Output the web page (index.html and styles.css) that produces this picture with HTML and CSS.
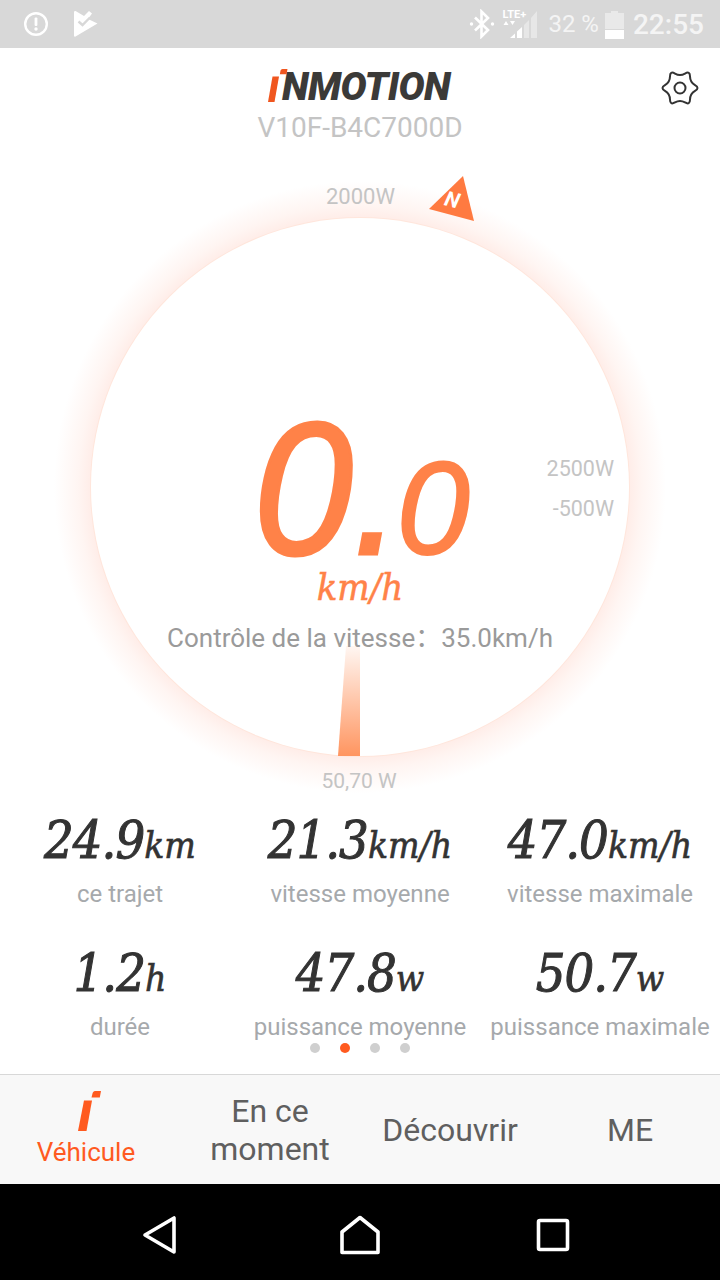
FILE: index.html
```html
<!DOCTYPE html>
<html lang="fr">
<head>
<meta charset="utf-8">
<title>Inmotion V10F</title>
<link rel="stylesheet" href="styles.css">
</head>
<body>
<div class="app">
  <div class="statusbar">
    <div class="status-left">
      <svg class="ic-alert" width="26" height="26" viewBox="0 0 26 26"><circle cx="13" cy="13" r="10.8" fill="none" stroke="#fff" stroke-width="2.4"/><rect x="11.6" y="6.5" width="2.8" height="8.5" rx="1" fill="#fff"/><circle cx="13" cy="18" r="1.7" fill="#fff"/></svg>
      <svg class="ic-play" width="26" height="28" viewBox="0 0 26 28"><path d="M1 2.500 C1 1 2 .6 3 1.300 L11 6 L16 1 L19 3.500 L15 9 L24.500 13.500 L2.500 26.500 C1.500 27 1 26.500 1 25.500 Z" fill="#fff"/><path d="M5.500 11.500 L9.500 15 L17 7.500" fill="none" stroke="#d8d8d8" stroke-width="2.400"/></svg>
    </div>
    <div class="status-right">
      <svg class="ic-bt" width="26" height="30" viewBox="0 0 26 30"><path d="M6 8.500 L19 21 L12.500 27.500 V2.500 L19 9 L6 21.500" fill="none" stroke="#fff" stroke-width="2.600"/><circle cx="2.500" cy="15" r="1.700" fill="#fff"/><circle cx="23.500" cy="15" r="1.700" fill="#fff"/></svg>
      <div class="signal">
        <span class="lte">LTE+</span>
        <svg width="36" height="28" viewBox="0 0 36 28"><path d="M1.500 15 L4 11 L6.500 15 Z M8 11 L13 11 L10.500 15 Z" fill="#fff"/><path d="M8 28 L13 23.500 V28 Z M15 21.500 L20 17 V28 H15 Z" fill="#fff"/><path d="M22 15 L27 10 V28 H22 Z M29 8 L35 1 V28 H29 Z" fill="#fff" opacity=".4"/></svg>
      </div>
      <span class="batt-pct">32 %</span>
      <svg class="ic-batt" width="20" height="28" viewBox="0 0 20 28"><path d="M6 0 H13 V2 H19 V18 H0 V2 H6 Z" fill="#fff" opacity=".45"/><rect x="0" y="19" width="19" height="9" fill="#fff"/></svg>
      <span class="clock">22:55</span>
    </div>
  </div>

  <header class="topbar">
    <div class="logo">
      <svg class="logo-mark" width="20" height="34" viewBox="0 0 20 34"><path d="M4.500 7.500 H11 L6.500 33 H0 Z" fill="#f0561f"/><path d="M12.500 1.800 C12.800 .7 13.500 0 14.500 0 H19.500 L18.500 5.200 H11.800 Z" fill="#f0561f"/></svg>
      <span class="logo-text">NMOTION</span>
    </div>
    <div class="model">V10F-B4C7000D</div>
    <svg class="gear" width="40" height="40" viewBox="-20 -20 40 40"><path d="M15.020 -2.900 Q20 0 15.020 2.900 Q10.050 5.800 10.020 11.560 Q10 17.320 5 14.460 Q0 11.600 -5 14.460 Q-10 17.320 -10.020 11.560 Q-10.050 5.800 -15.020 2.900 Q-20 0 -15.020 -2.900 Q-10.050 -5.800 -10.020 -11.560 Q-10 -17.320 -5 -14.460 Q0 -11.600 5 -14.460 Q10 -17.320 10.020 -11.560 Q10.050 -5.800 15.020 -2.900 Z" fill="none" stroke="#333" stroke-width="2"/><circle r="5.500" fill="none" stroke="#333" stroke-width="2"/></svg>
  </header>

  <section class="gauge">
    <span class="dial-label l-2000">2000W</span>
    <div class="north">
      <svg width="48" height="48" viewBox="0 0 48 48"><path d="M35 1 L46 46 L1 34 Z" fill="#ff7a40"/></svg>
      <span class="north-n">N</span>
    </div>
    <div class="disc">
      <svg class="needle" width="24" height="110" viewBox="0 0 24 110"><defs><linearGradient id="ng" x1="0" y1="1" x2="0" y2="0"><stop offset="0" stop-color="#ff9560"/><stop offset="1" stop-color="#ff9560" stop-opacity=".08"/></linearGradient></defs><path d="M9 0 H23 V110 H1 Z" fill="url(#ng)"/></svg>
      <span class="dial-label l-2500">2500W</span>
      <span class="dial-label l-500">-500W</span>
      <div class="speed"><span class="speed-int">0.</span><span class="speed-dec">0</span></div>
      <div class="speed-unit">km/h</div>
      <div class="cruise">Contrôle de la vitesse：35.0km/h</div>
    </div>
    <span class="dial-label l-power">50,70 W</span>
  </section>

  <section class="stats">
    <div class="stat"><div class="stat-val">24.9<small>km</small></div><div class="stat-name">ce trajet</div></div>
    <div class="stat"><div class="stat-val">21.3<small>km/h</small></div><div class="stat-name">vitesse moyenne</div></div>
    <div class="stat"><div class="stat-val">47.0<small>km/h</small></div><div class="stat-name">vitesse maximale</div></div>
    <div class="stat"><div class="stat-val">1.2<small>h</small></div><div class="stat-name">durée</div></div>
    <div class="stat"><div class="stat-val">47.8<small>w</small></div><div class="stat-name">puissance moyenne</div></div>
    <div class="stat"><div class="stat-val">50.7<small>w</small></div><div class="stat-name">puissance maximale</div></div>
  </section>

  <div class="dots"><i class="dot"></i><i class="dot dot-on"></i><i class="dot"></i><i class="dot"></i></div>

  <nav class="tabs">
    <div class="tab tab-on">
      <svg width="24" height="40" viewBox="0 0 24 40"><path d="M6 9.500 H14 L8.500 40 H0 Z" fill="#ff5a1f" transform="translate(1 0)"/><path d="M15.500 2.500 C15.900 1 16.800 0 18 0 H24 L22.800 6.500 H14.500 Z" fill="#ff5a1f"/></svg>
      <span>Véhicule</span>
    </div>
    <div class="tab">En ce moment</div>
    <div class="tab">Découvrir</div>
    <div class="tab">ME</div>
  </nav>

  <footer class="navbar">
    <svg class="nav-back" width="36" height="40" viewBox="0 0 36 40"><path d="M3 20 L32 3 V37 Z" fill="none" stroke="#fff" stroke-width="3.600" stroke-linejoin="round"/></svg>
    <svg width="40" height="40" viewBox="0 0 40 40"><path d="M2 37.500 V17 L20 2.500 L38 17 V37.500 Z" fill="none" stroke="#fff" stroke-width="3.600" stroke-linejoin="round"/></svg>
    <svg width="34" height="34" viewBox="0 0 34 34"><rect x="2.500" y="2.500" width="29" height="29" rx="1.500" fill="none" stroke="#fff" stroke-width="3.600"/></svg>
  </footer>
</div>
</body>
</html>
```

FILE: styles.css
```css
* { box-sizing: border-box; }
html, body { margin: 0; padding: 0; background: #fff; }
body { font-family: Roboto, "Noto Sans CJK SC", sans-serif; }
.app { width: 720px; height: 1280px; display: flex; flex-direction: column; overflow: hidden; }

/* status bar */
.statusbar { height: 48px; flex: none; background: #d8d8d8; display: flex; justify-content: space-between; align-items: center; padding: 0 16px 0 23px; color: #f4f4f4; }
.status-left { display: flex; align-items: center; gap: 24px; }
.status-right { display: flex; align-items: center; }
.ic-bt { margin-right: 7px; }
.signal { position: relative; width: 36px; height: 28px; margin-right: 10px; }
.signal svg { display: block; }
.lte { position: absolute; left: 0; top: -1px; font-size: 11px; line-height: 11px; font-weight: 700; color: #fff; white-space: nowrap; }
.batt-pct { font-size: 24px; font-weight: 400; margin-right: 6px; }
.ic-batt { margin-right: 8px; margin-top: 2px; }
.clock { font-size: 28px; font-weight: 500; }

/* header */
.topbar { position: relative; height: 102px; flex: none; display: flex; flex-direction: column; align-items: center; padding-top: 20px; }
.logo { display: flex; align-items: flex-end; height: 38px; margin-left: -2px; }
.logo-mark { display: block; margin-right: -6px; margin-bottom: 3px; }
.logo-text { font-size: 39px; line-height: 38px; font-weight: 900; font-style: italic; letter-spacing: -0.6px; color: #3b3a38; }
.model { font-size: 28px; line-height: 32px; color: #c4c4c4; margin-top: 6px; }
.gear { position: absolute; right: 20px; top: 20px; }

/* gauge */
.gauge { position: relative; height: 650px; flex: none; padding-top: 68px; background: radial-gradient(circle 310px at 360px 337px, #ffece7 0, #ffece7 268px, #fff5f2 282px, #fff 306px); }
.disc { position: relative; width: 538px; height: 538px; margin: 0 auto; border-radius: 50%; background: #fff; box-shadow: 0 0 0 1px #ffe6dc; display: flex; flex-direction: column; align-items: center; padding-top: 195px; }
.dial-label { position: absolute; font-size: 22px; line-height: 26px; color: #c4c4c4; white-space: nowrap; }
.l-2000 { left: 326px; top: 34px; }
.l-2500 { right: 15px; top: 238px; font-size: 21.5px; }
.l-500 { right: 15px; top: 278px; font-size: 21.5px; }
.l-power { left: 0; right: 2px; top: 618px; text-align: center; font-size: 21px; }
.north { position: absolute; left: 428px; top: 25px; width: 48px; height: 48px; }
.north svg { display: block; }
.north-n { position: absolute; left: 17px; top: 13px; font-size: 21px; line-height: 24px; font-weight: 700; font-style: italic; color: #fff; transform: rotate(14deg); }
.needle { position: absolute; left: 246px; bottom: 0; }
.speed { display: flex; align-items: baseline; color: #ff8248; font-family: "Liberation Sans", sans-serif; font-style: italic; height: 150px; line-height: 150px; margin-left: -6px; }
.speed-int { font-size: 190px; -webkit-text-stroke: 3px #ff8248; transform: scaleX(.94); transform-origin: right center; }
.speed-dec { font-size: 131px; -webkit-text-stroke: 2px #ff8248; margin-left: -6px; }
.speed-unit { font-family: "DejaVu Serif", serif; font-stretch: condensed; font-style: italic; font-size: 38px; line-height: 38px; color: #ff8248; -webkit-text-stroke: .5px #ff8248; margin-top: 5px; }
.cruise { position: relative; font-size: 26px; line-height: 32px; color: #9a9a9a; margin-top: 16px; white-space: nowrap; }

/* stats */
.stats { flex: none; display: grid; grid-template-columns: repeat(3, 240px); grid-template-rows: 133px 110px; }
.stat { display: flex; flex-direction: column; align-items: center; padding-top: 8px; }
.stat-val { font-family: "DejaVu Serif", serif; font-stretch: condensed; font-style: italic; font-size: 52px; line-height: 65px; color: #333; letter-spacing: -1px; -webkit-text-stroke: 1px #333; white-space: nowrap; }
.stat-val small { font-size: 37px; letter-spacing: 0; -webkit-text-stroke: .6px #333; }
.stat-name { font-size: 24px; line-height: 32px; color: #a6a9ac; white-space: nowrap; }

.dots { flex: 1; display: flex; justify-content: center; gap: 20px; }
.dot { display: block; width: 10px; height: 10px; border-radius: 50%; background: #cfcfcf; }
.dot-on { background: #ff5a1f; }

/* tabs */
.tabs { height: 110px; flex: none; background: #f8f8f8; border-top: 1px solid #d8d8d8; display: grid; grid-template-columns: repeat(4, 180px); }
.tab { display: flex; flex-direction: column; align-items: center; justify-content: center; text-align: center; font-size: 32px; line-height: 38px; color: #5f5f5f; padding: 0 24px; }
.tab-on { color: #ff5a1f; font-size: 26px; line-height: 30px; padding: 0 8px 2px 0; }
.tab-on svg { display: block; margin: 0 0 6px 6px; }

/* nav */
.navbar { height: 96px; flex: none; background: #000; display: flex; align-items: center; justify-content: center; gap: 156px; padding: 6px 8px 0 0; }
.nav-back { margin-right: 6px; }
```
